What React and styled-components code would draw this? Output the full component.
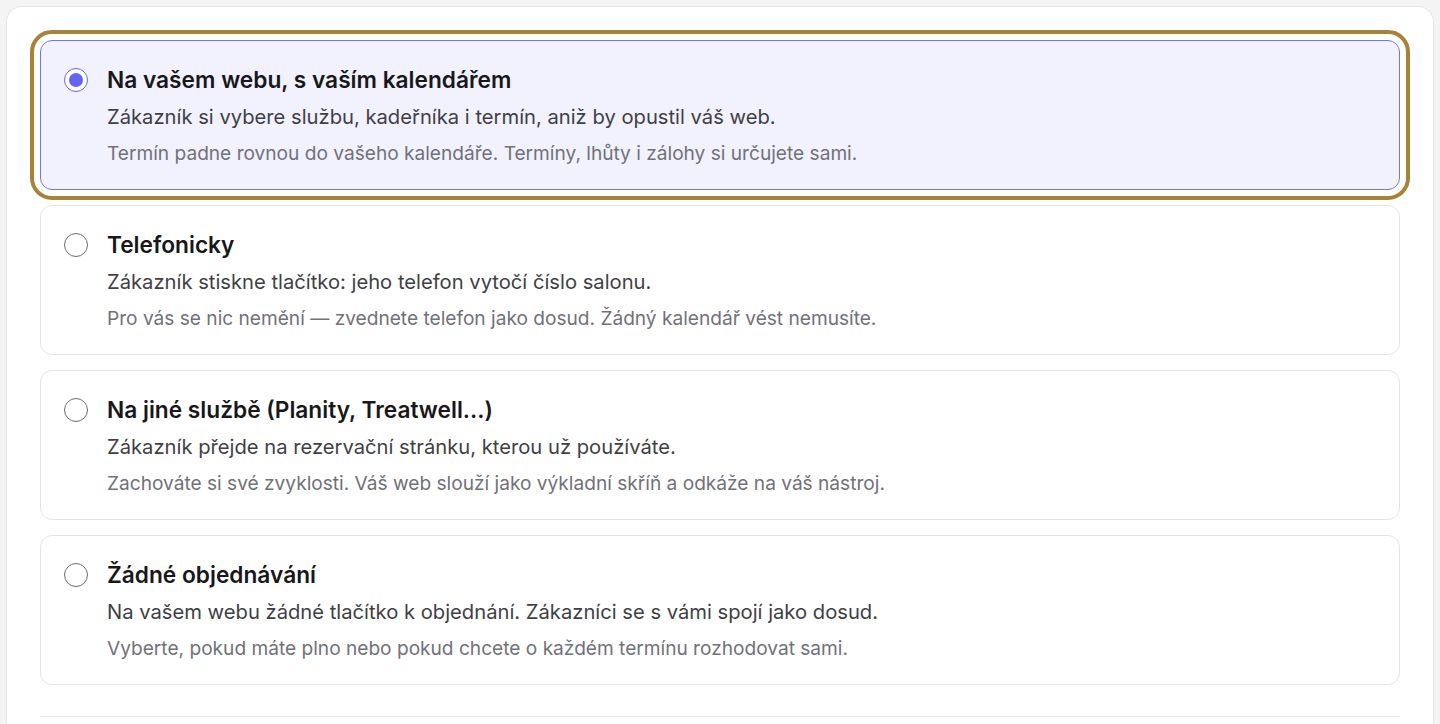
import React, { useState } from "react";
import styled, { createGlobalStyle, css } from "styled-components";

const Global = createGlobalStyle`
  html, body { margin: 0; padding: 0; background: #f4f4f5; }
  body { font-family: Inter, "Noto Sans", sans-serif; -webkit-font-smoothing: antialiased; }
  * { box-sizing: border-box; }
`;

const Page = styled.div`
  padding: 6px 6px 0 6px;
  min-height: 724px;
`;

const Panel = styled.div`
  background: #ffffff;
  border: 1px solid #e7e7e9;
  border-bottom: none;
  border-radius: 16px 16px 0 0;
  padding: 33px 33px 40px 33px;
  min-height: 718px;
`;

const List = styled.div`
  display: flex;
  flex-direction: column;
  gap: 15px;
`;

const Option = styled.label`
  display: flex;
  align-items: flex-start;
  gap: 19px;
  padding: 23px;
  border: 1px solid #e4e4e7;
  border-radius: 12px;
  background: #ffffff;
  cursor: pointer;
  height: 150px;
  ${(p) =>
    p.$selected &&
    css`
      background: #f1f2fe;
      border-color: #7276ee;
      outline: 4px solid #a7833a;
      outline-offset: 6px;
    `}
`;

const Radio = styled.span`
  flex: none;
  width: 24px;
  height: 24px;
  margin-top: 4px;
  border-radius: 50%;
  border: 1.5px solid ${(p) => (p.$checked ? "#6366f1" : "#6b6b73")};
  background: #ffffff;
  display: flex;
  align-items: center;
  justify-content: center;
  &::after {
    content: "";
    width: 14px;
    height: 14px;
    border-radius: 50%;
    background: ${(p) => (p.$checked ? "#6366f1" : "transparent")};
  }
`;

const Texts = styled.div`
  display: flex;
  flex-direction: column;
`;

const Title = styled.div`
  font-size: 22.7px;
  font-weight: 600;
  line-height: 32px;
  color: #18181b;
`;

const Desc = styled.div`
  margin-top: 7px;
  font-size: 20.2px;
  line-height: 28px;
  color: #3f3f46;
`;

const Note = styled.div`
  margin-top: 9px;
  font-size: 19.13px;
  line-height: 26px;
  color: #71717a;
`;

const Divider = styled.div`
  margin-top: 31px;
  height: 1px;
  background: #e4e4e7;
`;

const options = [
  {
    title: "Na vašem webu, s vaším kalendářem",
    desc: "Zákazník si vybere službu, kadeřníka i termín, aniž by opustil váš web.",
    note: "Termín padne rovnou do vašeho kalendáře. Termíny, lhůty i zálohy si určujete sami.",
  },
  {
    title: "Telefonicky",
    desc: "Zákazník stiskne tlačítko: jeho telefon vytočí číslo salonu.",
    note: "Pro vás se nic nemění — zvednete telefon jako dosud. Žádný kalendář vést nemusíte.",
  },
  {
    title: "Na jiné službě (Planity, Treatwell...)",
    desc: "Zákazník přejde na rezervační stránku, kterou už používáte.",
    note: "Zachováte si své zvyklosti. Váš web slouží jako výkladní skříň a odkáže na váš nástroj.",
  },
  {
    title: "Žádné objednávání",
    desc: "Na vašem webu žádné tlačítko k objednání. Zákazníci se s vámi spojí jako dosud.",
    note: "Vyberte, pokud máte plno nebo pokud chcete o každém termínu rozhodovat sami.",
  },
];

export default function App() {
  const [sel, setSel] = useState(0);
  return (
    <>
      <Global />
      <Page>
        <Panel>
          <List>
            {options.map((o, i) => (
              <Option key={i} $selected={sel === i} onClick={() => setSel(i)}>
                <Radio $checked={sel === i} />
                <Texts>
                  <Title>{o.title}</Title>
                  <Desc>{o.desc}</Desc>
                  <Note>{o.note}</Note>
                </Texts>
              </Option>
            ))}
          </List>
          <Divider />
        </Panel>
      </Page>
    </>
  );
}
